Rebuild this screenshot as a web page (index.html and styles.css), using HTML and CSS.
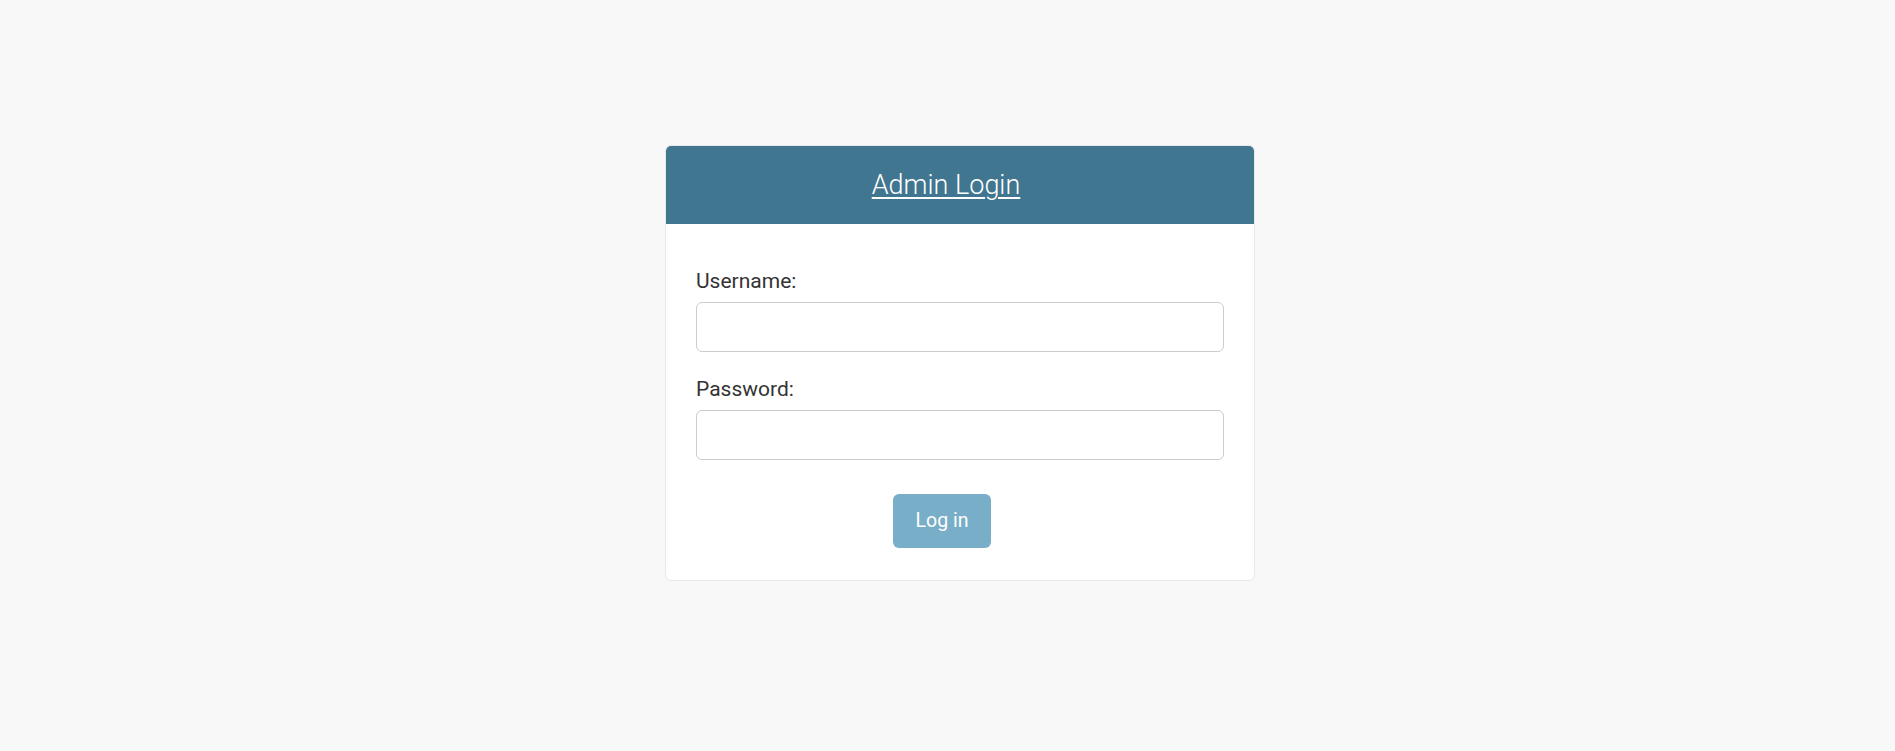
FILE: index.html
```html
<!DOCTYPE html>
<html lang="en">
<head>
<meta charset="utf-8">
<title>Log in | Admin</title>
<link rel="stylesheet" href="styles.css">
</head>
<body class="login">
<div class="page">
  <div class="container">
    <div class="header">
      <h1 class="site-name"><a href="#">Admin Login</a></h1>
    </div>
    <div class="content">
      <form class="login-form">
        <div class="form-row">
          <label for="id_username">Username:</label>
          <input type="text" id="id_username" class="field">
        </div>
        <div class="form-row">
          <label for="id_password">Password:</label>
          <input type="password" id="id_password" class="field">
        </div>
        <div class="submit-row">
          <button type="button" class="btn">Log in</button>
        </div>
      </form>
    </div>
  </div>
</div>
</body>
</html>
```
FILE: styles.css
```css
html, body {
  margin: 0;
  padding: 0;
  background: #f8f8f8;
  font-family: Roboto, "Liberation Sans", Arial, sans-serif;
  color: #333;
}
.page {
  display: flex;
  justify-content: center;
  padding: 145px 0 0 25px;
}
.container {
  width: 588px;
  background: #fff;
  border: 1px solid #e8e8e8;
  border-radius: 6px;
  overflow: hidden;
}
.header {
  background: #417690;
  height: 78px;
  display: flex;
  align-items: center;
  justify-content: center;
  padding-right: 28px;
}
.site-name {
  margin: 0;
  font-size: 27px;
  font-weight: 300;
  line-height: 32px;
}
.site-name a {
  color: #fff;
  text-decoration: underline;
  text-underline-offset: 3px;
  text-decoration-thickness: 2px;
}
.content {
  padding: 30px 30px 32px;
}
.login-form {
  display: flex;
  flex-direction: column;
  gap: 4px;
}
.form-row {
  padding: 6px 0;
  display: flex;
  flex-direction: column;
}
.form-row label {
  font-size: 21px;
  line-height: 42px;
  color: #333;
}
.field {
  box-sizing: border-box;
  width: 100%;
  height: 50px;
  padding: 12px;
  border: 1px solid #ccc;
  border-radius: 6px;
  font-size: 20px;
  font-family: inherit;
  background: #fff;
  outline: none;
}
.submit-row {
  padding: 24px 36px 0 0;
  display: flex;
  justify-content: center;
}
.btn {
  background: #79aec8;
  color: #fff;
  border: none;
  border-radius: 6px;
  font-family: inherit;
  font-size: 19.5px;
  line-height: 24px;
  padding: 15px 22.5px;
  cursor: pointer;
}
```
